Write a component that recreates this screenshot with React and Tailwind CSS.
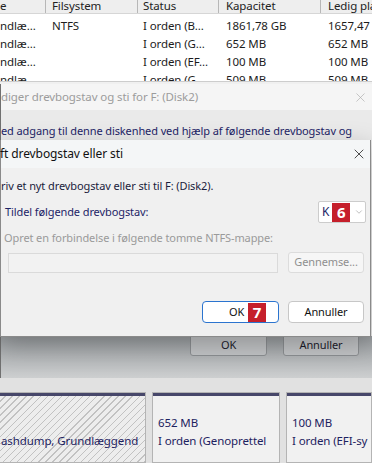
import { X, ChevronDown } from "lucide-react";

const Badge = ({ n }) => (
  <span className="inline-flex w-[18px] h-[19px] items-center justify-center bg-[#c51f2b] text-white font-bold text-[15px] leading-none tracking-normal">
    {n}
  </span>
);

const cols = "grid grid-cols-[46px_92px_81px_102px_1fr]";

const rows = [
  ["ndlæ...", "NTFS", "I orden (B...", "1861,78 GB", "1657,47"],
  ["ndlæ...", "", "I orden (G...", "652 MB", "652 MB"],
  ["ndlæ...", "", "I orden (EF...", "100 MB", "100 MB"],
  ["ndlæ...", "", "I orden (G...", "509 MB", "509 MB"],
];

const App = () => {
  return (
    <div className="relative w-[372px] h-[463px] overflow-hidden bg-[#f0f0f0] font-['Noto_Sans',sans-serif] text-[11px] tracking-[-0.1px] text-[#1b1d3a]">
      {/* volume list */}
      <div className="h-[82px] overflow-hidden bg-white border-b border-[#cdcdcd]">
        <div className={`${cols} h-[14px] bg-[#eeeeee] border-b border-[#d6d6d6] leading-[12px] text-[#222] text-[11.5px]`}>
          <div className="border-r border-[#b7b7b7] whitespace-nowrap">e</div>
          <div className="pl-[6px] border-r border-[#b7b7b7]">Filsystem</div>
          <div className="pl-[5px] border-r border-[#b7b7b7]">Status</div>
          <div className="pl-[7px] border-r border-[#b7b7b7]">Kapacitet</div>
          <div className="pl-[7px] whitespace-nowrap">Ledig plads</div>
        </div>
        <div className="pt-[3px] text-[#1c1c1c] text-[11.5px]">
          {rows.map((r, i) => (
            <div key={i} className={`${cols} h-[18px] leading-[18px] whitespace-nowrap`}>
              <div>{r[0]}</div>
              <div className="pl-[6px]">{r[1]}</div>
              <div className="pl-[5px]">{r[2]}</div>
              <div className="pl-[7px]">{r[3]}</div>
              <div className="pl-[7px]">{r[4]}</div>
            </div>
          ))}
        </div>
      </div>
      <div className="h-[2px]" />

      {/* back dialog */}
      <div className="h-[294px] flex flex-col border-l border-[#707070] bg-[#eaeaea]">
        <div className="h-[26px] bg-[#f5f5f5] flex items-center justify-between pr-[4px] text-[#9c9c9c] whitespace-nowrap text-[11.5px]">
          <span>diger drevbogstav og sti for F: (Disk2)</span>
          <X size={15} strokeWidth={1} className="text-[#a8a8a8]" />
        </div>
        <div className="mt-[13px] leading-[16px] whitespace-nowrap text-[#1d2467]">
          ed adgang til denne diskenhed ved hjælp af følgende drevbogstav og
        </div>
        <div className="flex-1" />
        <div className="h-[42px] bg-gradient-to-b from-[#999da0] to-[#cdcfd0] flex justify-end items-start gap-[16px] pr-[13px]">
          <div className="w-[77px] h-[21px] -mt-px flex items-center justify-center bg-[#c3c5c7] border border-[#8d9093] rounded-b-[3px] text-[#1c1c2c]">
            OK
          </div>
          <div className="w-[76px] h-[21px] -mt-px flex items-center justify-center bg-[#c3c5c7] border border-[#8d9093] rounded-b-[3px] text-[#1c1c2c]">
            Annuller
          </div>
        </div>
      </div>

      {/* disk map */}
      <div className="h-[85px] bg-[#e1e1e1] pt-[14px]">
        <div className="flex gap-[6px] h-full -ml-[2px]">
          <div className="w-[148px] border border-[#b4b4b4] flex flex-col overflow-hidden">
            <div className="h-[3px] bg-[#47476a]" />
            <div className="flex-1 pt-[36px] pl-[2px] leading-[18px] whitespace-nowrap overflow-hidden text-[#1d2260] text-[11.5px] bg-[#ececec] bg-[repeating-linear-gradient(135deg,#ededed_0px,#ededed_4px,#c2c2c2_4px,#c2c2c2_5px)]">
              ashdump, Grundlæggend
            </div>
          </div>
          <div className="w-[128px] border border-[#b4b4b4] flex flex-col overflow-hidden">
            <div className="h-[3px] bg-[#47476a]" />
            <div className="flex-1 pt-[18px] pl-[5px] leading-[18px] whitespace-nowrap overflow-hidden text-[#1d2260] text-[11.5px] bg-[#f1f1f1]">
              <div>652 MB</div>
              <div>I orden (Genoprettel</div>
            </div>
          </div>
          <div className="flex-1 border border-[#b4b4b4] flex flex-col overflow-hidden">
            <div className="h-[3px] bg-[#47476a]" />
            <div className="flex-1 pt-[18px] pl-[5px] leading-[18px] whitespace-nowrap overflow-hidden text-[#1d2260] text-[11.5px] bg-[#f1f1f1]">
              <div>100 MB</div>
              <div>I orden (EFI-sy</div>
            </div>
          </div>
        </div>
      </div>

      {/* front dialog */}
      <div className="absolute left-0 top-[140px] w-[371px] h-[197px] flex flex-col border-r border-b border-l border-[#8a8a8a] bg-[#f0f0f0] shadow-[0_8px_24px_rgba(0,0,0,0.25)]">
        <div className="h-[28px] bg-[#f4f6f7] flex items-center justify-between pr-[3px] whitespace-nowrap text-[12px] text-[#111]">
          <span className="-ml-px">ft drevbogstav eller sti</span>
          <X size={16} strokeWidth={1.2} className="text-[#222]" />
        </div>
        <div className="mt-[10px] leading-[16px] whitespace-nowrap text-[#1a1c3c]">
          riv et nyt drevbogstav eller sti til F: (Disk2).
        </div>
        <div className="mt-[7px] h-[22px] flex items-center justify-between pl-[4px] pr-[4px] text-[#1d2467]">
          <span>Tildel følgende drevbogstav:</span>
          <div className="w-[48px] h-[22px] bg-white border border-[#cccccc] rounded-[2px] flex items-center pl-[3px] gap-[3px]">
            <span className="text-[#1d2467] text-[12px]">K</span>
            <Badge n="6" />
            <ChevronDown size={10} strokeWidth={1.3} className="text-[#8a8a8a] ml-[1px]" />
          </div>
        </div>
        <div className="mt-[7px] pl-[3px] leading-[16px] whitespace-nowrap text-[#9a9a9a]">
          Opret en forbindelse i følgende tomme NTFS-mappe:
        </div>
        <div className="mt-[6px] flex items-center">
          <div className="ml-[7px] w-[270px] h-[20px] border border-[#dadada] bg-[#f2f2f2]" />
          <div className="ml-[10px] w-[76px] h-[21px] border border-[#dcdcdc] rounded-[3px] bg-[#f6f6f6] flex items-center justify-center text-[#8f8f8f]">
            Gennemse...
          </div>
        </div>
        <div className="mt-[28px] flex justify-end gap-[9px] pr-[6px]">
          <div className="w-[77px] h-[22px] border-[1.5px] border-[#2b74cf] rounded-[4px] bg-white flex items-center justify-center gap-[4px] pl-[14px]">
            <span className="text-[#111]">OK</span>
            <Badge n="7" />
          </div>
          <div className="w-[76px] h-[22px] border border-[#c7c7c7] rounded-[4px] bg-white flex items-center justify-center text-[#111]">
            Annuller
          </div>
        </div>
      </div>
    </div>
  );
};

export default App;
